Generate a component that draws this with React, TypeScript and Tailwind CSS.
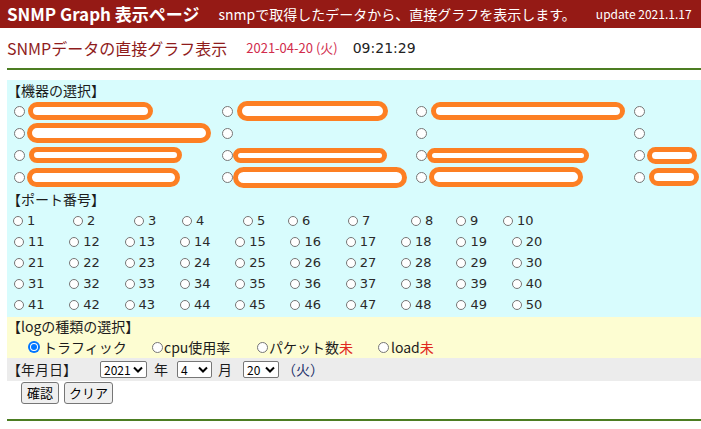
import React from "react";

const jp = "font-['Noto_Sans_CJK_JP',sans-serif]";
const num = "font-['DejaVu_Sans','Noto_Sans_CJK_JP',sans-serif]";

function Radio({ size = "w-[11px] h-[11px]", checked = false }: { size?: string; checked?: boolean }) {
  if (checked) {
    return (
      <span className={`${size} shrink-0 rounded-full bg-[#0075ff] flex items-center justify-center`}>
        <span className="w-[8px] h-[8px] rounded-full bg-white flex items-center justify-center">
          <span className="w-[6px] h-[6px] rounded-full bg-[#0075ff]" />
        </span>
      </span>
    );
  }
  return <span className={`${size} shrink-0 rounded-full border border-[#767676] bg-white box-border`} />;
}

// redacted device names (orange marker)
function Blob({ className }: { className: string }) {
  return <span className={`block shrink-0 rounded-full border-[5px] border-[#fd7f23] bg-white box-border ${className}`} />;
}

const colWidths = ["w-[211px] pl-[7px]", "w-[194px] pl-[4px]", "w-[218px] pl-[4px]", "flex-1 pl-[4px]"];

const devices: (string | null)[][] = [
  ["ml-[3px] w-[125px] h-[18px]", "ml-[4px] w-[151px] h-[20px]", "ml-[4px] w-[194px] h-[18px]", null],
  ["ml-[2px] w-[184px] h-[20px]", null, null, null],
  ["ml-[4px] w-[153px] h-[16px]", "ml-[0px] w-[154px] h-[15px]", "ml-[0px] w-[162px] h-[15px]", "ml-[2px] w-[50px] h-[17px]"],
  ["ml-[2px] w-[153px] h-[19px]", "ml-[0px] w-[174px] h-[21px]", "ml-[2px] w-[154px] h-[20px]", "ml-[4px] w-[50px] h-[18px]"],
];

const firstRowWidths = [
  "w-[60px]",
  "w-[61px]",
  "w-[48px]",
  "w-[61px]",
  "w-[45px]",
  "w-[60px]",
  "w-[63px]",
  "w-[45px]",
  "w-[47px]",
  "w-[50px]",
];

function Port({ n }: { n: number }) {
  return (
    <div className="flex items-center">
      <Radio size="w-[10px] h-[10px]" />
      <span className={`ml-[4px] text-[13px] text-[#2a2a2a] ${num}`}>{n}</span>
    </div>
  );
}

function Select({ value, className }: { value: string; className: string }) {
  return (
    <div
      className={`h-[17px] border border-[#767676] rounded-[2px] bg-white flex items-center justify-between pl-[3px] pr-[3px] text-[12px] leading-none text-black ${className}`}
    >
      <span>{value}</span>
      <svg width="10" height="7" viewBox="0 0 10 7">
        <path d="M1 1.5 L5 5.5 L9 1.5" fill="none" stroke="#000" strokeWidth="2" />
      </svg>
    </div>
  );
}

export default function App() {
  return (
    <div className={`w-[701px] h-[429px] bg-white overflow-hidden text-[#1c1c1c] ${jp}`}>
      {/* header */}
      <div className="h-[28px] bg-[#951a15] flex items-center pl-[7px] text-white whitespace-nowrap">
        <span className="text-[17px] font-bold">SNMP Graph 表示ページ</span>
        <span className="ml-[19px] text-[14px]">snmpで取得したデータから、直接グラフを表示します。</span>
        <span className="ml-[20px] text-[12px]">update 2021.1.17</span>
      </div>

      {/* title */}
      <div className="h-[40px] flex items-center pl-[7px] whitespace-nowrap">
        <span className="text-[16px] text-[#8f1c1c]">SNMPデータの直接グラフ表示</span>
        <span className="ml-[19px] text-[13px] text-[#d12c4c]">2021-04-20 (火)</span>
        <span className={`ml-[15px] text-[14px] text-[#222] ${num}`}>09:21:29</span>
      </div>
      <div className="ml-[7px] h-[2px] bg-[#4c7d22]" />

      {/* device + port */}
      <div className="ml-[7px] mt-[10px] bg-[#d8fcfd] pb-[2px]">
        <div className="h-[20px] flex items-center text-[14px]">【機器の選択】</div>
        {devices.map((row, r) => (
          <div key={r} className="h-[22px] flex items-center">
            {row.map((blob, c) => (
              <div key={c} className={`flex items-center ${colWidths[c]}`}>
                <Radio />
                {blob && <Blob className={blob} />}
              </div>
            ))}
          </div>
        ))}
        <div className="h-[22px] flex items-center text-[14px]">【ポート番号】</div>
        <div className="h-[21px] flex items-center pl-[6px]">
          {firstRowWidths.map((w, i) => (
            <div key={i} className={w}>
              <Port n={i + 1} />
            </div>
          ))}
        </div>
        {[1, 2, 3, 4].map((r) => (
          <div key={r} className="h-[21px] grid grid-cols-[repeat(10,55.3px)] items-center pl-[7px]">
            {Array.from({ length: 10 }, (_, i) => (
              <Port key={i} n={r * 10 + i + 1} />
            ))}
          </div>
        ))}
      </div>

      {/* log type */}
      <div className="ml-[7px] bg-[#fdfdd2]">
        <div className="h-[19px] flex items-center text-[14px]">【logの種類の選択】</div>
        <div className="h-[22px] flex items-center pl-[21px] text-[14px] whitespace-nowrap">
          <div className="w-[124px] flex items-center">
            <Radio size="w-[12px] h-[12px]" checked />
            <span className="ml-[3px]">トラフィック</span>
          </div>
          <div className="w-[105px] flex items-center">
            <Radio />
            <span className="ml-[1px]">cpu使用率</span>
          </div>
          <div className="w-[121px] flex items-center">
            <Radio />
            <span className="ml-[1px]">パケット数</span>
            <span className="text-[#e0281e]">未</span>
          </div>
          <div className="flex items-center">
            <Radio />
            <span className="ml-[2px]">load</span>
            <span className="text-[#e0281e]">未</span>
          </div>
        </div>
      </div>

      {/* date */}
      <div className="ml-[7px] h-[23px] bg-[#ececec] flex items-center text-[14px] whitespace-nowrap">
        <span className="w-[93px]">【年月日】</span>
        <Select value="2021" className="w-[47px]" />
        <span className="ml-[7px] w-[23px]">年</span>
        <Select value="4" className="w-[35px]" />
        <span className="ml-[6px] w-[25px]">月</span>
        <Select value="20" className="w-[36px]" />
        <span className="ml-[3px] text-[#22306a]">（火）</span>
      </div>

      {/* buttons */}
      <div className="mt-[1px] pl-[21px] flex gap-[5px] text-[13px]">
        <button className="h-[22px] w-[38px] border border-[#767676] rounded-[3px] bg-[#efefef] text-black">確認</button>
        <button className="h-[22px] w-[49px] border border-[#767676] rounded-[3px] bg-[#efefef] text-black">クリア</button>
      </div>
      <div className="ml-[7px] mt-[15px] h-[2px] bg-[#4c7d22]" />
    </div>
  );
}
